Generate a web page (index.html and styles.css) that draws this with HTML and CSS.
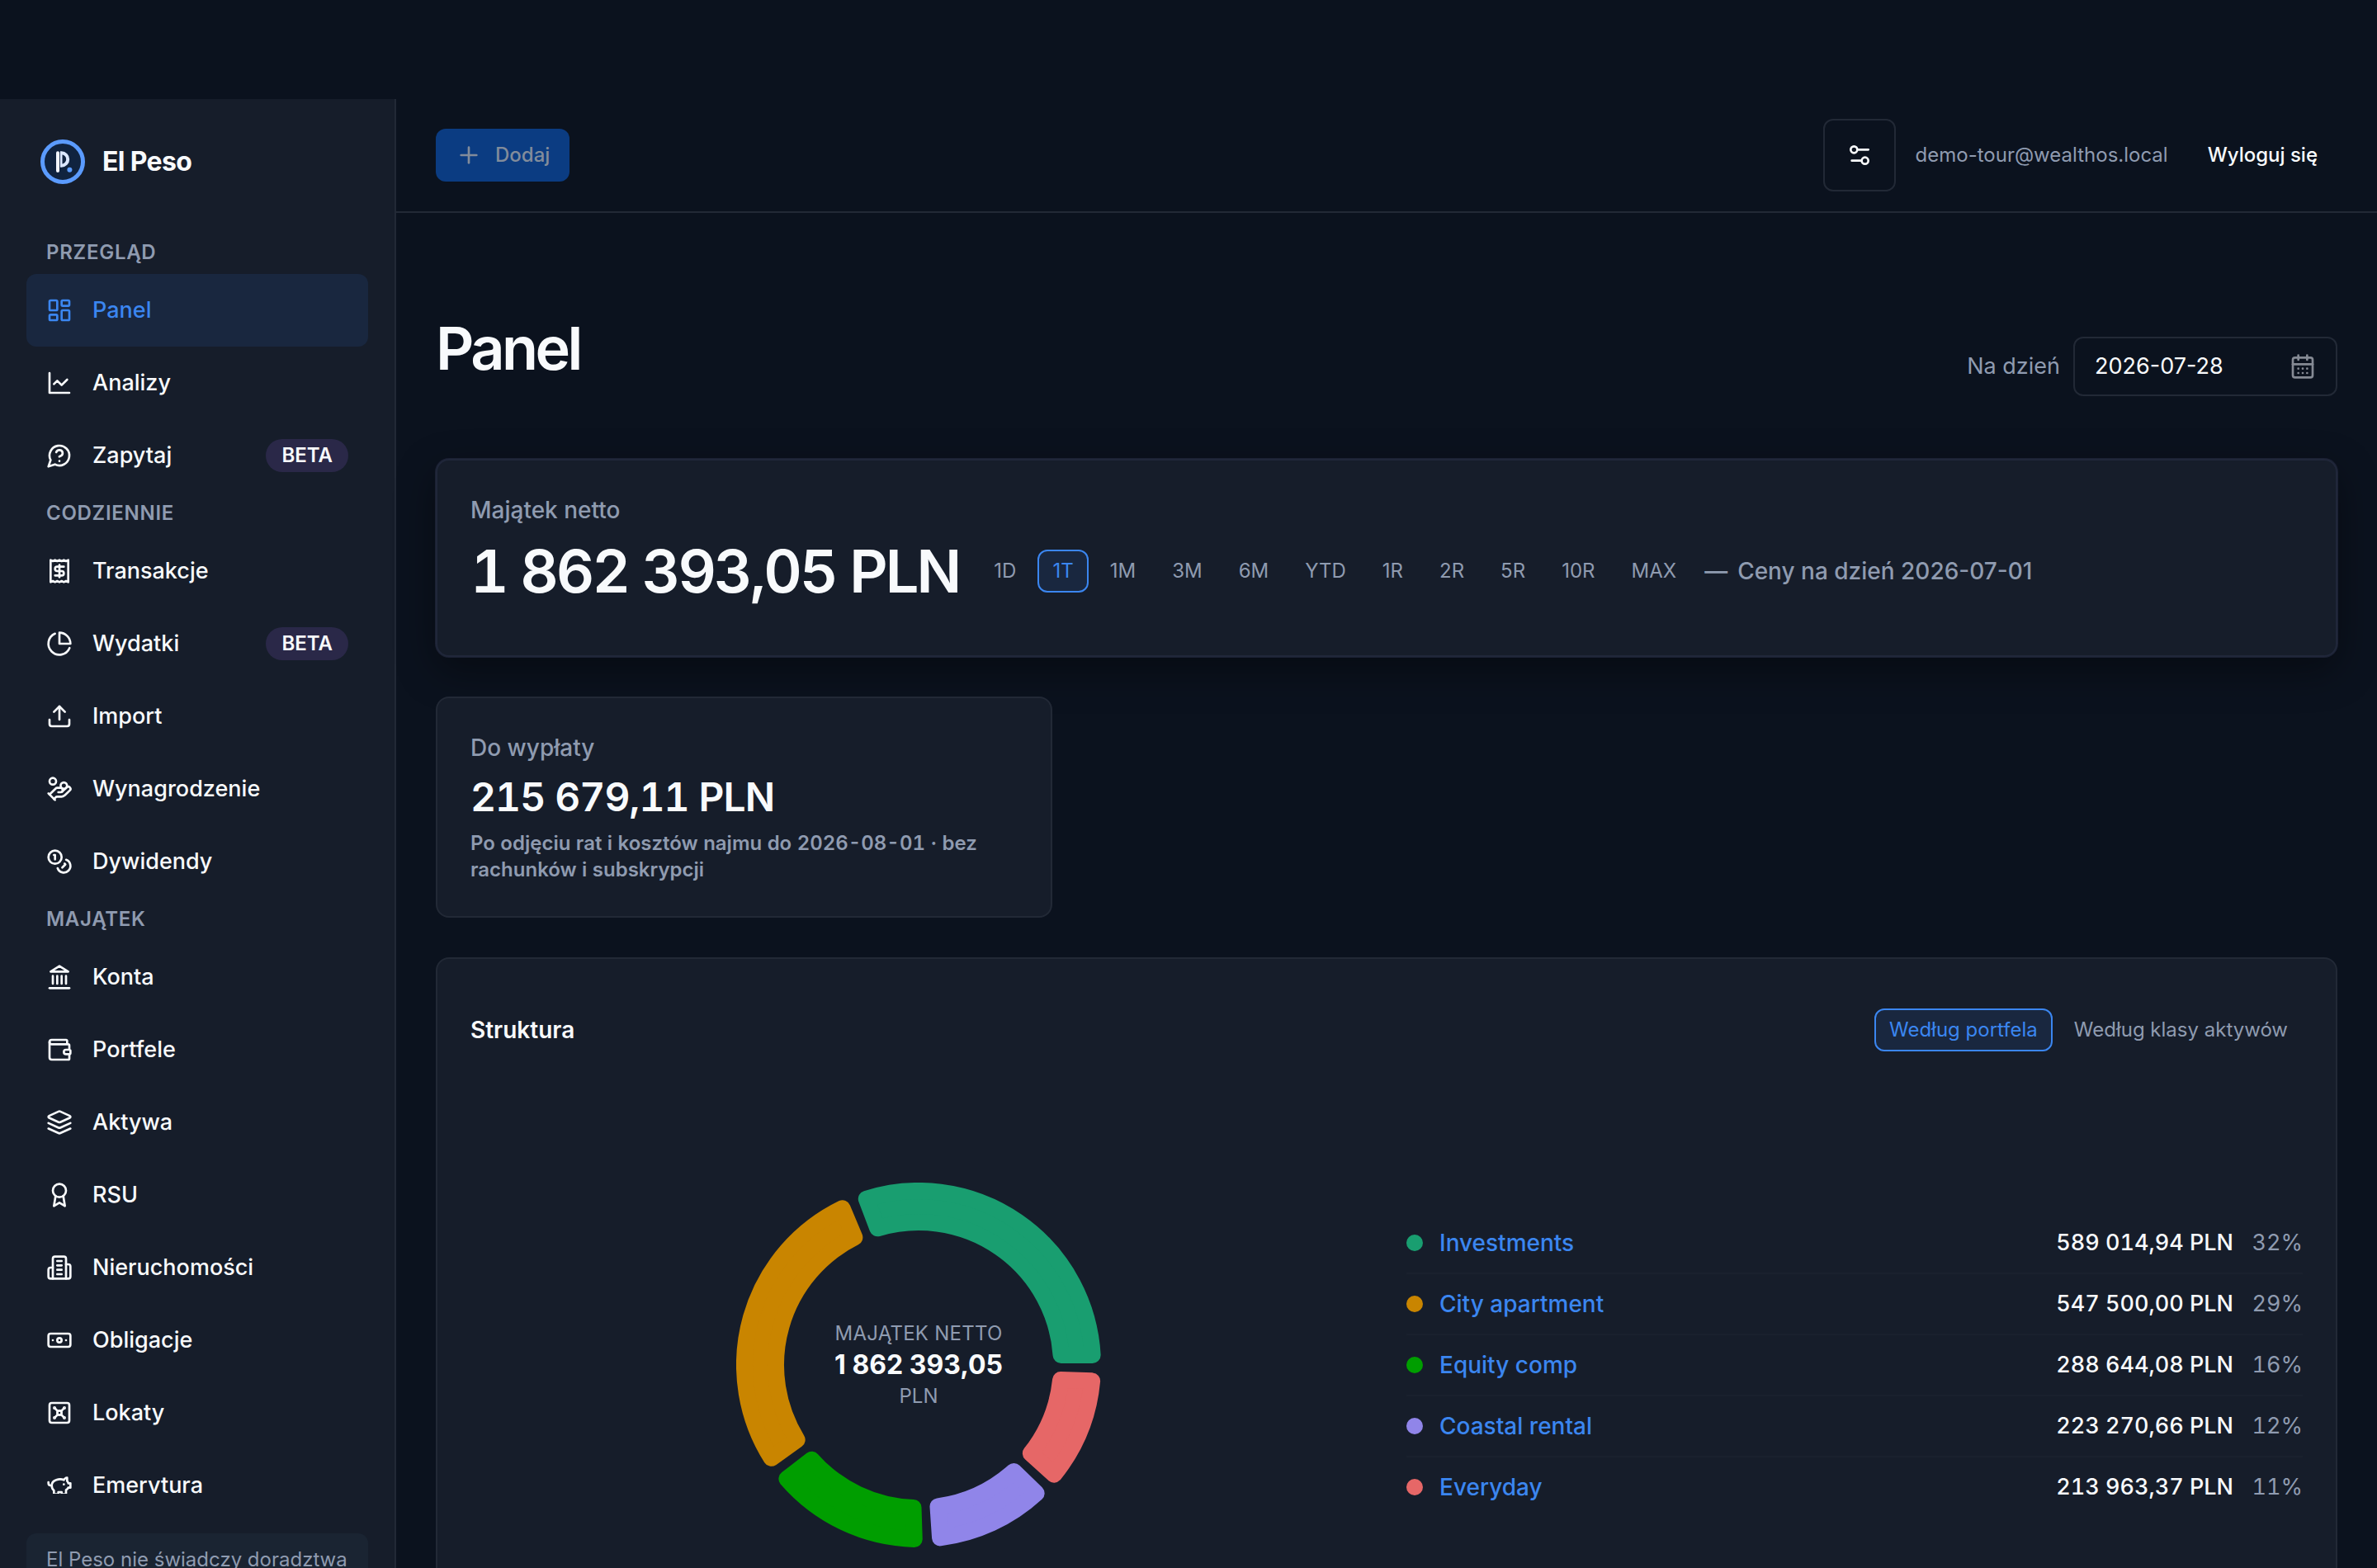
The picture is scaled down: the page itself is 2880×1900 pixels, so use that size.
FILE: index.html
```
<!DOCTYPE html>
<html lang="pl">
<head>
    <meta charset="UTF-8">
    <meta name="viewport" content="width=device-width, initial-scale=1.0">
    <title>Panel - El Peso</title>
    <link rel="stylesheet" href="styles.css">
</head>
<body>
    <div class="shell">
        <!-- Sidebar -->
        <aside class="sidebar">
            <a href="#" class="brand">
                <svg class="brand-logo" viewBox="0 0 56 56" fill="none">
                    <circle cx="28" cy="28" r="24.500" fill="#10233f" stroke="#5b9bff" stroke-width="5"/>
                    <path d="M22 17.200v21.800" stroke="#f1f5ff" stroke-width="4" stroke-linecap="round"/>
                    <path d="M25 17.300h1.500a7.700 7.700 0 0 1 0 15.400H25" stroke="#dbe7ff" stroke-width="4"/>
                    <path d="M26.200 16v18" stroke="#dbe7ff" stroke-width="2.600"/>
                    <circle cx="36.400" cy="37.700" r="3" fill="#5b9bff"/>
                </svg>
                <span>El Peso</span>
            </a>

            <nav class="nav">
                <h2 class="nav-title">Przegląd</h2>
                <a href="#" class="nav-item active">
                    <svg class="icon" viewBox="0 0 24 24"><rect width="7" height="9" x="3" y="3" rx="1"/><rect width="7" height="5" x="14" y="3" rx="1"/><rect width="7" height="9" x="14" y="12" rx="1"/><rect width="7" height="5" x="3" y="16" rx="1"/></svg>
                    <span>Panel</span>
                </a>
                <a href="#" class="nav-item">
                    <svg class="icon" viewBox="0 0 24 24"><path d="M3 3v18h18"/><path d="m19 9-5 5-4-4-3 3"/></svg>
                    <span>Analizy</span>
                </a>
                <a href="#" class="nav-item">
                    <svg class="icon" viewBox="0 0 24 24"><path d="M7.900 20A9 9 0 1 0 4 16.100L2 22Z"/><path d="M9.090 9a3 3 0 0 1 5.830 1c0 2-3 3-3 3"/><path d="M12 17h.01"/></svg>
                    <span>Zapytaj</span>
                    <span class="badge">BETA</span>
                </a>

                <h2 class="nav-title">Codziennie</h2>
                <a href="#" class="nav-item">
                    <svg class="icon" viewBox="0 0 24 24"><path d="M4 2v20l2-1 2 1 2-1 2 1 2-1 2 1 2-1 2 1V2l-2 1-2-1-2 1-2-1-2 1-2-1-2 1Z"/><path d="M16 8h-6a2 2 0 1 0 0 4h4a2 2 0 1 1 0 4H8"/><path d="M12 17.500v-11"/></svg>
                    <span>Transakcje</span>
                </a>
                <a href="#" class="nav-item">
                    <svg class="icon" viewBox="0 0 24 24"><path d="M21.210 15.890A10 10 0 1 1 8 2.830"/><path d="M22 12A10 10 0 0 0 12 2v10z"/></svg>
                    <span>Wydatki</span>
                    <span class="badge">BETA</span>
                </a>
                <a href="#" class="nav-item">
                    <svg class="icon" viewBox="0 0 24 24"><path d="M21 15v4a2 2 0 0 1-2 2H5a2 2 0 0 1-2-2v-4"/><path d="m17 8-5-5-5 5"/><path d="M12 3v12"/></svg>
                    <span>Import</span>
                </a>
                <a href="#" class="nav-item">
                    <svg class="icon" viewBox="0 0 24 24"><path d="M11 15h2a2 2 0 1 0 0-4h-3c-.6 0-1.100.2-1.400.6L3 17"/><path d="m7 21 1.600-1.400c.3-.4.8-.6 1.400-.6h4c1.100 0 2.100-.4 2.800-1.200l4.600-4.400a2 2 0 0 0-2.750-2.910l-4.200 3.900"/><path d="m2 16 6 6"/><circle cx="16" cy="9" r="2.900"/><circle cx="6" cy="5" r="3"/></svg>
                    <span>Wynagrodzenie</span>
                </a>
                <a href="#" class="nav-item">
                    <svg class="icon" viewBox="0 0 24 24"><circle cx="8" cy="8" r="6"/><path d="M18.090 10.370A6 6 0 1 1 10.340 18"/><path d="M7 6h1v4"/><path d="m16.710 13.880.7.71-2.820 2.820"/></svg>
                    <span>Dywidendy</span>
                </a>

                <h2 class="nav-title">Majątek</h2>
                <a href="#" class="nav-item">
                    <svg class="icon" viewBox="0 0 24 24"><path d="M3 22h18"/><path d="M6 18v-7"/><path d="M10 18v-7"/><path d="M14 18v-7"/><path d="M18 18v-7"/><path d="m12 2 8 5H4z"/></svg>
                    <span>Konta</span>
                </a>
                <a href="#" class="nav-item">
                    <svg class="icon" viewBox="0 0 24 24"><path d="M19 7V4a1 1 0 0 0-1-1H5a2 2 0 0 0 0 4h15a1 1 0 0 1 1 1v4h-3a2 2 0 0 0 0 4h3a1 1 0 0 0 1-1v-2a1 1 0 0 0-1-1"/><path d="M3 5v14a2 2 0 0 0 2 2h15a1 1 0 0 0 1-1v-4"/></svg>
                    <span>Portfele</span>
                </a>
                <a href="#" class="nav-item">
                    <svg class="icon" viewBox="0 0 24 24"><path d="m12.830 2.180a2 2 0 0 0-1.660 0L2.600 6.080a1 1 0 0 0 0 1.830l8.580 3.910a2 2 0 0 0 1.660 0l8.580-3.900a1 1 0 0 0 0-1.830Z"/><path d="m22 17.650-9.170 4.160a2 2 0 0 1-1.660 0L2 17.650"/><path d="m22 12.650-9.170 4.160a2 2 0 0 1-1.660 0L2 12.650"/></svg>
                    <span>Aktywa</span>
                </a>
                <a href="#" class="nav-item">
                    <svg class="icon" viewBox="0 0 24 24"><circle cx="12" cy="8" r="6"/><path d="M15.477 12.890 17 22l-5-3-5 3 1.523-9.110"/></svg>
                    <span>RSU</span>
                </a>
                <a href="#" class="nav-item">
                    <svg class="icon" viewBox="0 0 24 24"><path d="M6 22V4a2 2 0 0 1 2-2h8a2 2 0 0 1 2 2v18Z"/><path d="M6 12H4a2 2 0 0 0-2 2v6a2 2 0 0 0 2 2h2"/><path d="M18 9h2a2 2 0 0 1 2 2v9a2 2 0 0 1-2 2h-2"/><path d="M10 6h4"/><path d="M10 10h4"/><path d="M10 14h4"/><path d="M10 18h4"/></svg>
                    <span>Nieruchomości</span>
                </a>
                <a href="#" class="nav-item">
                    <svg class="icon" viewBox="0 0 24 24"><rect width="20" height="12" x="2" y="6" rx="2"/><circle cx="12" cy="12" r="2"/><path d="M6 12h.01M18 12h.01"/></svg>
                    <span>Obligacje</span>
                </a>
                <a href="#" class="nav-item">
                    <svg class="icon" viewBox="0 0 24 24"><rect width="18" height="18" x="3" y="3" rx="2"/><circle cx="7.500" cy="7.500" r=".5" fill="currentColor"/><path d="m7.900 7.900 2.700 2.700"/><circle cx="16.500" cy="7.500" r=".5" fill="currentColor"/><path d="m13.400 10.600 2.700-2.700"/><circle cx="7.500" cy="16.500" r=".5" fill="currentColor"/><path d="m7.900 16.100 2.700-2.700"/><circle cx="16.500" cy="16.500" r=".5" fill="currentColor"/><path d="m13.400 13.400 2.700 2.700"/><circle cx="12" cy="12" r="2"/></svg>
                    <span>Lokaty</span>
                </a>
                <a href="#" class="nav-item">
                    <svg class="icon" viewBox="0 0 24 24"><path d="M19 5c-1.500 0-2.800 1.400-3 2-3.500-1.500-11-.3-11 5 0 1.800 0 3 2 4.500V20h4v-2h3v2h4v-4c1-.5 1.700-1 2-2h2v-4h-2c0-1-.5-1.500-1-2V5z"/><path d="M2 9v1c0 1.100.9 2 2 2h1"/><path d="M16 11h.01"/></svg>
                    <span>Emerytura</span>
                </a>
            </nav>

            <p class="sidebar-note">El Peso nie świadczy doradztwa</p>
        </aside>

        <div class="content">
            <!-- Top bar -->
            <header class="topbar">
                <button type="button" class="btn-add" disabled>
                    <svg class="icon" viewBox="0 0 24 24"><path d="M5 12h14"/><path d="M12 5v14"/></svg>
                    Dodaj
                </button>
                <div class="account">
                    <button type="button" class="btn-icon" aria-label="Ustawienia">
                        <svg class="icon" viewBox="0 0 24 24"><path d="M20 7h-9"/><path d="M14 17H5"/><circle cx="17" cy="17" r="3"/><circle cx="7" cy="7" r="3"/></svg>
                    </button>
                    <span class="email">demo-tour@wealthos.local</span>
                    <button type="button" class="btn-logout">Wyloguj się</button>
                </div>
            </header>

            <main class="page">
                <div class="page-head">
                    <h1>Panel</h1>
                    <div class="date-field">
                        <label for="as-of">Na dzień</label>
                        <div class="date-box">
                            <input type="text" id="as-of" value="2026-07-28">
                            <button type="button" class="date-open" aria-label="Kalendarz">
                                <svg class="icon" viewBox="0 0 24 24"><path d="M8 2v4"/><path d="M16 2v4"/><rect width="18" height="18" x="3" y="4" rx="2"/><path d="M3 10h18"/><path d="M8 14h.01"/><path d="M12 14h.01"/><path d="M16 14h.01"/><path d="M8 18h.01"/><path d="M12 18h.01"/><path d="M16 18h.01"/></svg>
                            </button>
                        </div>
                    </div>
                </div>

                <!-- Net worth -->
                <section class="card card-hero">
                    <div class="card-label">Majątek netto</div>
                    <div class="hero-row">
                        <div class="hero-value">1 862 393,05 PLN</div>
                        <div class="tabs">
                            <button type="button" class="tab">1D</button>
                            <button type="button" class="tab active">1T</button>
                            <button type="button" class="tab">1M</button>
                            <button type="button" class="tab">3M</button>
                            <button type="button" class="tab">6M</button>
                            <button type="button" class="tab">YTD</button>
                            <button type="button" class="tab">1R</button>
                            <button type="button" class="tab">2R</button>
                            <button type="button" class="tab">5R</button>
                            <button type="button" class="tab">10R</button>
                            <button type="button" class="tab">MAX</button>
                        </div>
                        <div class="hero-note"><span>—</span><span>Ceny na dzień 2026-07-01</span></div>
                    </div>
                </section>

                <div class="stats">
                    <section class="card">
                        <div class="card-label">Do wypłaty</div>
                        <div class="stat-value">215 679,11 PLN</div>
                        <p class="stat-hint">Po odjęciu rat i kosztów najmu do 2026-08-01 · bez rachunków i subskrypcji</p>
                    </section>
                </div>

                <!-- Structure -->
                <section class="card card-structure">
                    <div class="structure-head">
                        <h2>Struktura</h2>
                        <div class="tabs">
                            <button type="button" class="tab active">Według portfela</button>
                            <button type="button" class="tab">Według klasy aktywów</button>
                        </div>
                    </div>
                    <div class="structure-body">
                        <div class="donut">
                            <svg id="donut" viewBox="-221 -221 442 442"></svg>
                            <div class="donut-center">
                                <span class="donut-label">Majątek netto</span>
                                <strong>1 862 393,05</strong>
                                <span>PLN</span>
                            </div>
                        </div>
                        <ul class="legend">
                            <li data-value="589014.94" data-color="#199e70"><span class="dot dot-teal"></span><a href="#">Investments</a><span class="amount">589 014,94 PLN</span><span class="share">32%</span></li>
                            <li data-value="547500.00" data-color="#c98500"><span class="dot dot-amber"></span><a href="#">City apartment</a><span class="amount">547 500,00 PLN</span><span class="share">29%</span></li>
                            <li data-value="288644.08" data-color="#009e00"><span class="dot dot-green"></span><a href="#">Equity comp</a><span class="amount">288 644,08 PLN</span><span class="share">16%</span></li>
                            <li data-value="223270.66" data-color="#9085e9"><span class="dot dot-violet"></span><a href="#">Coastal rental</a><span class="amount">223 270,66 PLN</span><span class="share">12%</span></li>
                            <li data-value="213963.37" data-color="#e66767"><span class="dot dot-red"></span><a href="#">Everyday</a><span class="amount">213 963,37 PLN</span><span class="share">11%</span></li>
                        </ul>
                    </div>
                </section>
            </main>
        </div>
    </div>

    <script src="script.js"></script>
</body>
</html>
```

FILE: styles.css
```
* {
    box-sizing: border-box;
}

body {
    margin: 0;
    background-color: #0b121e;
    color: #f8fafc;
    font-family: Inter, "Noto Sans", sans-serif;
    font-size: 28px;
    line-height: 40px;
}

h1, h2, p, ul {
    margin: 0;
    padding: 0;
}

a {
    color: inherit;
    text-decoration: none;
}

button, input {
    font: inherit;
    color: inherit;
    background: none;
    border: none;
    padding: 0;
}

.icon {
    display: block;
    flex: none;
    width: 32px;
    height: 32px;
    fill: none;
    stroke: currentColor;
    stroke-width: 2;
    stroke-linecap: round;
    stroke-linejoin: round;
}

.shell {
    display: grid;
    grid-template-columns: 480px 1fr;
    height: 100vh;
    padding-top: 120px;
    overflow: hidden;
}

/* Sidebar */
.sidebar {
    display: flex;
    flex-direction: column;
    height: 100vh;
    padding: 48px 32px 32px;
    background-color: #161d2a;
    border-right: 2px solid #222936;
}

.brand {
    display: flex;
    align-items: center;
    gap: 20px;
    padding: 0 16px;
    margin-bottom: 56px;
    font-size: 32px;
    font-weight: 700;
    letter-spacing: -0.02em;
}

.brand-logo {
    width: 56px;
    height: 56px;
}

.nav {
    flex: 1;
    min-height: 0;
    margin-bottom: 48px;
    overflow: hidden;
}

.nav-title {
    padding: 0 24px;
    color: #8f9bb0;
    font-size: 24px;
    font-weight: 600;
    line-height: 52px;
    letter-spacing: 0.03em;
    text-transform: uppercase;
}

.nav-item {
    display: flex;
    align-items: center;
    gap: 24px;
    height: 88px;
    padding: 0 24px;
    border-radius: 12px;
    font-size: 27px;
    font-weight: 500;
}

.nav-item.active {
    background-color: #19273f;
    color: #3b86f0;
}

.badge {
    margin-left: auto;
    padding: 0 19px;
    border-radius: 20px;
    background-color: #2a2848;
    font-size: 24px;
    font-weight: 600;
}

.sidebar-note {
    min-height: 130px;
    padding: 16px 24px;
    border-radius: 12px;
    background-color: #1a2432;
    color: #8f9bb0;
    font-size: 24px;
    line-height: 32px;
    white-space: nowrap;
}

/* Top bar */
.topbar {
    display: flex;
    align-items: center;
    justify-content: space-between;
    padding: 24px 48px;
    border-bottom: 2px solid #222936;
    font-size: 24px;
}

.btn-add {
    display: flex;
    align-items: center;
    gap: 16px;
    height: 64px;
    padding: 0 24px;
    border-radius: 12px;
    background-color: #0b3c82;
    color: #828c9b;
    font-weight: 500;
}

.account {
    display: flex;
    align-items: center;
    gap: 24px;
}

.btn-icon {
    display: flex;
    align-items: center;
    justify-content: center;
    width: 88px;
    height: 88px;
    border: 2px solid #222936;
    border-radius: 12px;
}

.email {
    color: #8f9bb0;
}

.btn-logout {
    padding: 0 24px;
    font-weight: 500;
}

/* Page */
.page {
    padding: 126px 48px 48px;
}

.page-head {
    display: flex;
    align-items: flex-end;
    justify-content: space-between;
    margin-bottom: 76px;
}

h1 {
    padding-bottom: 20px;
    font-size: 72px;
    font-weight: 600;
    line-height: 76px;
    letter-spacing: -0.05em;
}

.date-field {
    display: flex;
    align-items: center;
    gap: 16px;
    color: #8f9bb0;
    font-size: 27px;
}

.date-box {
    display: flex;
    align-items: center;
    width: 320px;
    height: 72px;
    padding: 0 24px;
    border: 2px solid #222936;
    border-radius: 12px;
}

.date-box input {
    flex: 1;
    min-width: 0;
    color: #f8fafc;
}

.date-open {
    color: #858a94;
}

.card {
    padding: 40px;
    border: 2px solid #222936;
    border-radius: 16px;
    background-color: #161d2a;
}

.card-label {
    color: #8f9bb0;
    font-weight: 500;
}

.card-hero {
    padding-bottom: 56px;
    margin-bottom: 48px;
    border-color: #20273a;
    box-shadow: 0 0 0 1px #1b2133, 0 16px 48px rgba(0, 0, 0, 0.4);
}

.hero-row {
    display: flex;
    align-items: center;
    gap: 16px;
    margin-top: 8px;
}

.hero-value {
    margin-right: 8px;
    font-size: 72px;
    font-weight: 600;
    line-height: 92px;
    letter-spacing: -0.04em;
    font-variant-numeric: tabular-nums;
    white-space: nowrap;
}

.tabs {
    display: flex;
    gap: 8px;
}

.tab {
    height: 52px;
    padding: 0 16px;
    border: 2px solid transparent;
    border-radius: 12px;
    color: #8f9bb0;
    font-size: 24px;
    line-height: 40px;
}

.tab.active {
    border-color: #3b86f0;
    background-color: #19273f;
    color: #3b86f0;
}

.hero-note {
    display: flex;
    gap: 12px;
    color: #8f9bb0;
    font-weight: 500;
}

.stats {
    display: grid;
    grid-template-columns: repeat(3, 1fr);
    gap: 32px;
    margin-bottom: 48px;
}

.stat-value {
    margin: 8px 0;
    font-size: 48px;
    font-weight: 600;
    line-height: 64px;
    letter-spacing: -0.02em;
    font-variant-numeric: tabular-nums;
}

.stat-hint {
    color: #8f9bb0;
    font-size: 24px;
    font-weight: 600;
    line-height: 32px;
    font-variant-numeric: tabular-nums;
}

.structure-head {
    display: flex;
    align-items: center;
    justify-content: space-between;
    padding: 20px 0;
}

.structure-head h2 {
    font-size: 28px;
    font-weight: 600;
}

.structure-body {
    display: grid;
    grid-template-columns: 1fr 1fr;
    align-items: center;
    gap: 48px;
    min-height: 600px;
    margin-top: 60px;
}

.donut {
    display: grid;
    place-items: center;
}

.donut > * {
    grid-area: 1 / 1;
}

.donut svg {
    width: 442px;
    height: 442px;
}

.donut-center {
    display: flex;
    flex-direction: column;
    align-items: center;
    color: #8f9bb0;
    font-size: 24px;
    line-height: 36px;
}

.donut-label {
    letter-spacing: 0.01em;
    text-transform: uppercase;
}

.donut-center strong {
    color: #f8fafc;
    font-size: 32px;
    font-weight: 700;
    line-height: 40px;
}

.legend {
    list-style: none;
    font-variant-numeric: tabular-nums;
}

.legend li {
    display: flex;
    align-items: center;
    gap: 20px;
    padding: 16px 0;
    font-weight: 500;
}

.legend li + li {
    border-top: 2px solid #1a212e;
}

.legend a {
    flex: 1;
    color: #3b86f0;
}

.amount {
    font-size: 27px;
}

.share {
    width: 64px;
    color: #8f9bb0;
    font-size: 27px;
    font-weight: 400;
    text-align: right;
}

.dot {
    width: 20px;
    height: 20px;
    border-radius: 50%;
}

.dot-teal {
    background-color: #199e70;
}

.dot-amber {
    background-color: #c98500;
}

.dot-green {
    background-color: #009e00;
}

.dot-violet {
    background-color: #9085e9;
}

.dot-red {
    background-color: #e66767;
}
```

FILE: script.js
```
// Donut chart drawn from the legend rows, counter-clockwise from 3 o'clock
const OUTER = 221;
const INNER = 163;
const PAD = 2;     // degrees between slices
const EDGE = 2;    // extra space on each side of a slice
const CORNER = 10; // half of the stroke, its round joins make the corners

const rows = [...document.querySelectorAll('.legend li')];
const total = rows.reduce((sum, row) => sum + Number(row.dataset.value), 0);

function point(radius, angle) {
    const rad = angle * Math.PI / 180;
    return `${(radius * Math.cos(rad)).toFixed(2)} ${(-radius * Math.sin(rad)).toFixed(2)}`;
}

let start = 0;
for (const row of rows) {
    const end = start + row.dataset.value / total * (360 - PAD * rows.length);
    const ro = OUTER - CORNER;
    const ri = INNER + CORNER;
    const dOut = Math.asin((EDGE + CORNER) / ro) * 180 / Math.PI;
    const dIn = Math.asin((EDGE + CORNER) / ri) * 180 / Math.PI;
    const path = document.createElementNS('http://www.w3.org/2000/svg', 'path');
    path.setAttribute('d',
        `M${point(ro, start + dOut)} A${ro} ${ro} 0 0 0 ${point(ro, end - dOut)} ` +
        `L${point(ri, end - dIn)} A${ri} ${ri} 0 0 1 ${point(ri, start + dIn)} Z`);
    path.setAttribute('fill', row.dataset.color);
    path.setAttribute('stroke', row.dataset.color);
    path.setAttribute('stroke-width', CORNER * 2);
    path.setAttribute('stroke-linejoin', 'round');
    document.getElementById('donut').appendChild(path);
    start = end + PAD;
}
```
